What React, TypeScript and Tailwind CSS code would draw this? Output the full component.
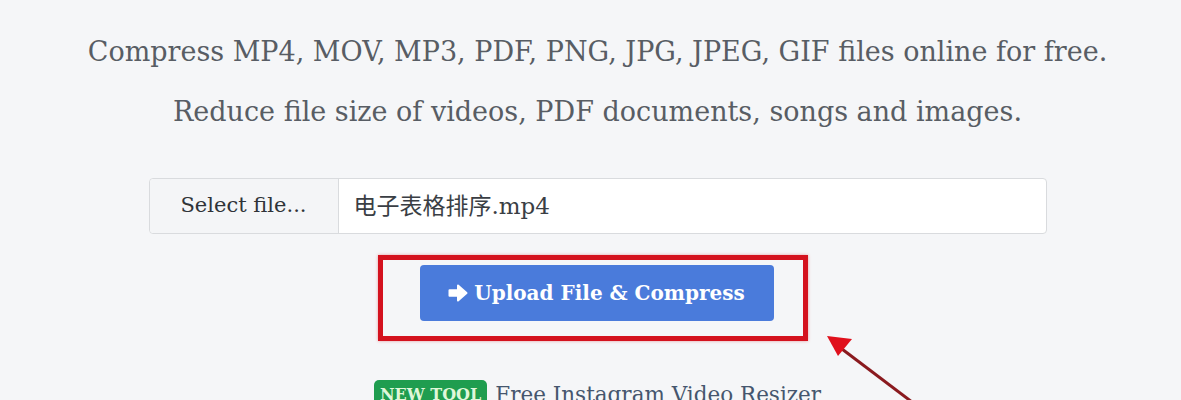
import React from 'react';

const serif = { fontFamily: '"DejaVu Serif", "Noto Sans CJK SC", serif' };

function ArrowRight({ className }: { className?: string }) {
  return (
    <svg viewBox="0 0 20 20" className={className} fill="currentColor" stroke="currentColor" strokeLinejoin="round" strokeWidth="2">
      <path d="M1.5 7.2h8.5V2.5L18.5 10L10 17.5v-4.7H1.5z" />
    </svg>
  );
}

export default function App() {
  return (
    <div className="relative h-[400px] w-[1181px] overflow-hidden bg-[#f5f6f8]" style={serif}>
      <div className="flex flex-col items-center pl-[14px] pt-[22px]">
        <p className="text-[27px] leading-[60px] text-[#585d64]">
          Compress MP4, MOV, MP3, PDF, PNG, JPG, JPEG, GIF files online for free.
        </p>
        <p className="text-[27px] leading-[60px] text-[#585d64]">
          Reduce file size of videos, PDF documents, songs and images.
        </p>

        <div className="mt-[36px] flex h-[56px] w-[898px] rounded-[4px] border border-[#d9dbde] bg-white">
          <div className="flex w-[189px] items-center justify-center rounded-l-[4px] border-r border-[#d9dbde] bg-[#f4f5f7] text-[21px] text-[#2f3338]">
            Select file...
          </div>
          <div className="flex flex-1 items-center pl-[15px] text-[23px] text-[#3a3e44]">
            电子表格排序.mp4
          </div>
        </div>

        <div className="mt-[21px] mr-[10px] border-[5px] border-[#d4121e] pt-[5px] pr-[29px] pb-[15px] pl-[37px] shadow-[0_0_3px_rgba(215,20,31,0.4)]">
          <button className="flex h-[56px] w-[354px] items-center justify-center gap-[6px] rounded-[4px] bg-[#4a7bdb] text-[20px] font-bold text-white">
            <ArrowRight className="h-[20px] w-[20px]" />
            Upload File &amp; Compress
          </button>
        </div>

        <div className="mt-[39px] flex items-center gap-[8px]">
          <span className="rounded-[5px] bg-[#1f9d4f] px-[6px] py-[3px] text-[16px] font-bold leading-[24px] text-[#dff7d9]">
            NEW TOOL
          </span>
          <span className="text-[21.5px] leading-[28px] text-[#45566e]">Free Instagram Video Resizer</span>
        </div>
      </div>

      <svg className="pointer-events-none absolute left-0 top-0" width="1181" height="400">
        <line x1="912" y1="402" x2="838" y2="346" stroke="#8a1a1f" strokeWidth="3" />
        <polygon points="827,336 852,339 838,356" fill="#e0101c" />
      </svg>
    </div>
  );
}
